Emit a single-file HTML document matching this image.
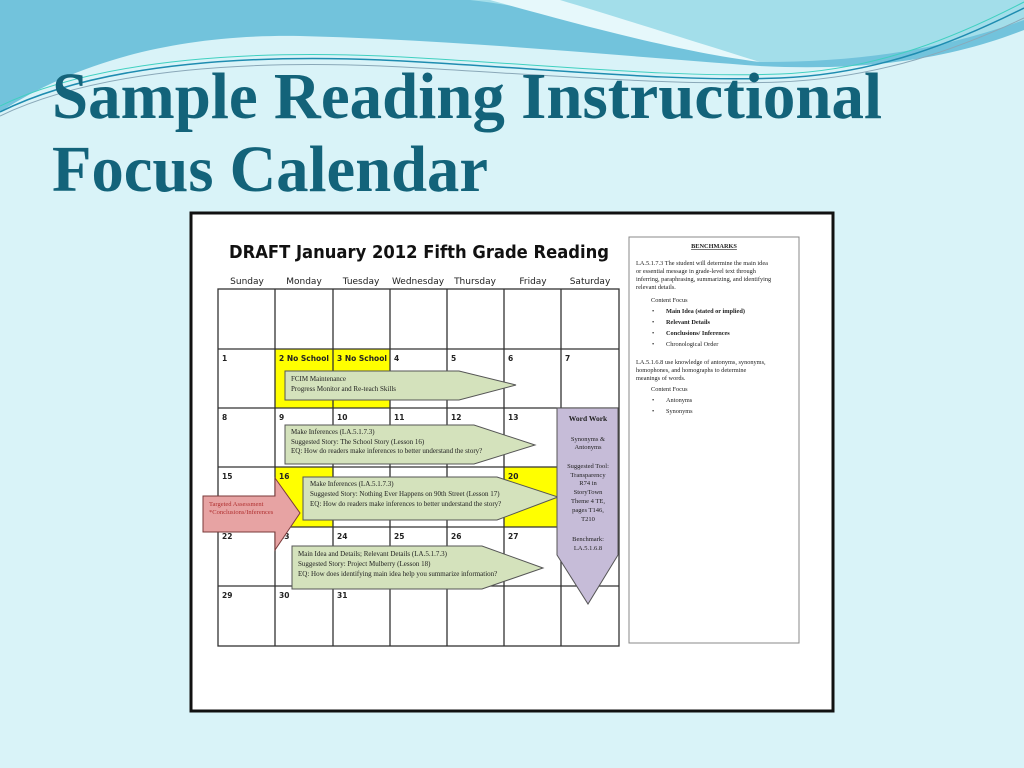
<!DOCTYPE html>
<html><head><meta charset="utf-8"><style>
html,body{margin:0;padding:0;width:1024px;height:768px;overflow:hidden;background:#d9f3f8;}
</style></head><body>
<svg width="1024" height="768" viewBox="0 0 1024 768" xmlns="http://www.w3.org/2000/svg">
<rect width="1024" height="768" fill="#d9f3f8"/>
<path d="M0 0 H1024 V30 C960 55 880 72 760 66 C620 56 460 40 300 36 C180 34 80 60 0 112 Z" fill="#72c3dc"/>
<path d="M470 0 H1024 V20 C940 50 860 62 760 62 C660 40 560 10 470 0 Z" fill="#a3deea"/>
<path d="M490 0 C580 25 680 52 760 62 C690 40 610 15 560 0 Z" fill="#e6f8fb"/>
<path d="M0 112 C100 62 260 52 420 62 C560 70 680 82 780 78 C880 74 960 40 1024 8" stroke="#1e8cb0" stroke-width="1.5" fill="none"/>
<path d="M0 106 C100 58 260 48 420 58 C560 66 680 78 780 74 C880 70 960 35 1024 2" stroke="#3fd0c0" stroke-width="1" fill="none"/>
<path d="M0 116 C100 68 260 58 420 68 C560 76 680 86 780 82 C880 78 960 48 1024 18" stroke="#8aa8b8" stroke-width="1" fill="none"/>
<text x="52" y="118" font-family="Liberation Serif" font-weight="bold" font-size="66" fill="#13637a" textLength="830" lengthAdjust="spacingAndGlyphs">Sample Reading Instructional</text>
<text x="52" y="191" font-family="Liberation Serif" font-weight="bold" font-size="66" fill="#13637a" textLength="436" lengthAdjust="spacingAndGlyphs">Focus Calendar</text>

<rect x="191" y="213" width="642" height="498" fill="#fff" stroke="#111" stroke-width="3"/>
<text x="229" y="258" font-family="DejaVu Sans" font-weight="bold" font-size="18" fill="#111" textLength="380" lengthAdjust="spacingAndGlyphs">DRAFT January 2012 Fifth Grade Reading</text>
<g font-family="DejaVu Sans" font-size="9" fill="#222" text-anchor="middle">
<text x="247" y="284">Sunday</text><text x="304" y="284">Monday</text><text x="361" y="284">Tuesday</text><text x="418" y="284">Wednesday</text><text x="475" y="284">Thursday</text><text x="533" y="284">Friday</text><text x="590" y="284">Saturday</text>
</g>
<rect x="275" y="349" width="115" height="59" fill="#ffff00"/>
<rect x="275" y="467" width="58" height="60" fill="#ffff00"/>
<rect x="504" y="467" width="57" height="60" fill="#ffff00"/>
<g stroke="#333" stroke-width="1.3" fill="none">
<rect x="218" y="289" width="401" height="357"/>
<line x1="218" y1="349" x2="619" y2="349"/><line x1="218" y1="408" x2="619" y2="408"/><line x1="218" y1="467" x2="619" y2="467"/><line x1="218" y1="527" x2="619" y2="527"/><line x1="218" y1="586" x2="619" y2="586"/>
<line x1="275" y1="289" x2="275" y2="646"/><line x1="333" y1="289" x2="333" y2="646"/><line x1="390" y1="289" x2="390" y2="646"/><line x1="447" y1="289" x2="447" y2="646"/><line x1="504" y1="289" x2="504" y2="646"/><line x1="561" y1="289" x2="561" y2="646"/>
</g>
<g font-family="DejaVu Sans" font-size="7.5" font-weight="bold" fill="#222">
<text x="222" y="361">1</text><text x="279" y="361">2 No School</text><text x="337" y="361">3 No School</text><text x="394" y="361">4</text><text x="451" y="361">5</text><text x="508" y="361">6</text><text x="565" y="361">7</text>
<text x="222" y="420">8</text><text x="279" y="420">9</text><text x="337" y="420">10</text><text x="394" y="420">11</text><text x="451" y="420">12</text><text x="508" y="420">13</text>
<text x="222" y="479">15</text><text x="279" y="479">16</text><text x="508" y="479">20</text>
<text x="222" y="539">22</text><text x="279" y="539">23</text><text x="337" y="539">24</text><text x="394" y="539">25</text><text x="451" y="539">26</text><text x="508" y="539">27</text>
<text x="222" y="598">29</text><text x="279" y="598">30</text><text x="337" y="598">31</text>
</g>
<g fill="#d4e2bc" stroke="#555" stroke-width="1">
<path d="M285 371 H459 L516 385 L459 400 H285 Z"/>
<path d="M285 425 H474 L535 445 L474 464 H285 Z"/>
<path d="M292 546 H482 L543 568 L482 589 H292 Z"/>
<path d="M303 477 H497 L558 497 L497 520 H303 Z"/>
</g>
<path d="M557 408 H618 V555 L588 604 L557 555 Z" fill="#c6bcd8" stroke="#555" stroke-width="1"/>
<path d="M203 496 H275 V478 L300 513 L275 550 V532 H203 Z" fill="#e7a3a3" stroke="#7a3a3a" stroke-width="1"/>
<g font-family="Liberation Serif" font-size="7" fill="#222">
<text x="291" y="381">FCIM Maintenance</text><text x="291" y="391">Progress Monitor and Re-teach Skills</text>
<text x="291" y="434">Make Inferences (LA.5.1.7.3)</text><text x="291" y="444">Suggested Story: The School Story (Lesson 16)</text><text x="291" y="453">EQ: How do readers make inferences to better understand the story?</text>
<text x="310" y="486">Make Inferences (LA.5.1.7.3)</text><text x="310" y="496">Suggested Story: Nothing Ever Happens on 90th Street (Lesson 17)</text><text x="310" y="506">EQ: How do readers make inferences to better understand the story?</text>
<text x="298" y="556">Main Idea and Details; Relevant Details (LA.5.1.7.3)</text><text x="298" y="566">Suggested Story: Project Mulberry (Lesson 18)</text><text x="298" y="576">EQ: How does identifying main idea help you summarize information?</text>
</g>
<g font-family="Liberation Serif" font-size="6.5" fill="#b03030"><text x="209" y="506">Targeted Assessment</text><text x="209" y="514">*Conclusions/Inferences</text></g>
<g font-family="Liberation Serif" font-size="6.5" fill="#222" text-anchor="middle">
<text x="588" y="421" font-weight="bold" font-size="7.5">Word Work</text>
<text x="588" y="441">Synonyms &amp;</text><text x="588" y="449">Antonyms</text>
<text x="588" y="468">Suggested Tool:</text><text x="588" y="477">Transparency</text><text x="588" y="485">R74 in</text><text x="588" y="494">StoryTown</text><text x="588" y="503">Theme 4 TE,</text><text x="588" y="512">pages T146,</text><text x="588" y="521">T210</text>
<text x="588" y="541">Benchmark:</text><text x="588" y="550">LA.5.1.6.8</text>
</g>
<rect x="629" y="237" width="170" height="406" fill="#fff" stroke="#888" stroke-width="1"/>
<g font-family="Liberation Serif" font-size="6.3" fill="#222">
<text x="714" y="248" text-anchor="middle" font-weight="bold" text-decoration="underline">BENCHMARKS</text>
<text x="636" y="265">LA.5.1.7.3 The student will determine the main idea</text>
<text x="636" y="273">or essential message in grade-level text through</text>
<text x="636" y="281">inferring, paraphrasing, summarizing, and identifying</text>
<text x="636" y="289">relevant details.</text>
<text x="651" y="302">Content Focus</text>
<text x="652" y="313">•</text><text x="666" y="313" font-weight="bold">Main Idea (stated or implied)</text>
<text x="652" y="324">•</text><text x="666" y="324" font-weight="bold">Relevant Details</text>
<text x="652" y="335">•</text><text x="666" y="335" font-weight="bold">Conclusions/ Inferences</text>
<text x="652" y="346">•</text><text x="666" y="346">Chronological Order</text>
<text x="636" y="364">LA.5.1.6.8 use knowledge of antonyms, synonyms,</text>
<text x="636" y="372">homophones, and homographs to determine</text>
<text x="636" y="380">meanings of words.</text>
<text x="651" y="391">Content Focus</text>
<text x="652" y="402">•</text><text x="666" y="402">Antonyms</text>
<text x="652" y="413">•</text><text x="666" y="413">Synonyms</text>
</g>
</svg>
</body></html>
